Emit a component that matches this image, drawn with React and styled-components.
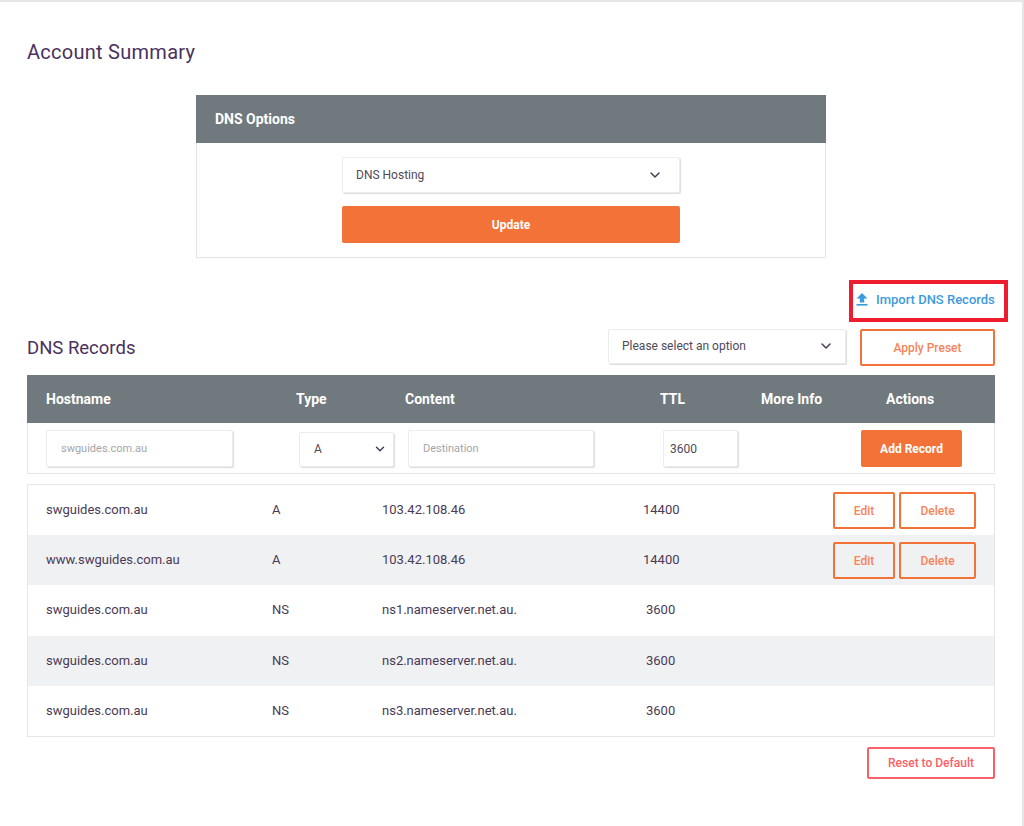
import React from 'react';
import styled, { createGlobalStyle } from 'styled-components';
import { ChevronDown } from 'lucide-react';

const GlobalStyle = createGlobalStyle`
  html, body {
    margin: 0;
    padding: 0;
    background: #fff;
    font-family: Roboto, "Liberation Sans", sans-serif;
    color: #4a3658;
  }
  * { box-sizing: border-box; }
`;

const Page = styled.div`
  width: 1024px;
  height: 826px;
  overflow: hidden;
  border-top: 2px solid #e6e6e6;
  border-right: 2px solid #e6e6e6;
  padding: 37px 27px 0 27px;
`;

const PageTitle = styled.h1`
  margin: 0;
  font-size: 20px;
  line-height: 26px;
  font-weight: 400;
  letter-spacing: 0.27px;
  color: #4a3160;
`;

const OptionsCard = styled.section`
  width: 630px;
  margin: 30px 0 0 169px;
  border: 1px solid #e4e4e4;
  border-top: none;
`;

const CardHeader = styled.div`
  height: 48px;
  margin: 0 -1px;
  padding-left: 19px;
  display: flex;
  align-items: center;
  background: #70797e;
  color: #fff;
  font-size: 14px;
  font-weight: 700;
`;

const CardBody = styled.div`
  padding: 14px 0 14px 145px;
  display: flex;
  flex-direction: column;
  gap: 13px;
`;

const Select = styled.div`
  width: ${(p) => p.$width}px;
  height: ${(p) => p.$height}px;
  padding: 0 ${(p) => p.$right || 16}px 1px ${(p) => p.$left || 13}px;
  display: flex;
  align-items: center;
  justify-content: space-between;
  background: #fff;
  border: 1px solid #ececec;
  border-radius: 2px;
  box-shadow: 1px 1px 1px #dcdcdc;
  font-size: 12px;
  color: #4f4a58;
`;

const SubmitButton = styled.button`
  width: ${(p) => p.$width}px;
  height: ${(p) => p.$height}px;
  padding: 0;
  background: #f37237;
  border: none;
  border-radius: 2px;
  color: #fff;
  font-family: inherit;
  font-size: 12px;
  font-weight: 700;
`;

const ImportRow = styled.div`
  margin-top: 22px;
  height: 42px;
  display: flex;
  justify-content: flex-end;
`;

const ImportLink = styled.a`
  width: 159px;
  margin-right: -13px;
  padding: 0 0 3px 3px;
  display: flex;
  align-items: center;
  gap: 8px;
  border: 4px solid #ed1c2e;
  color: #3d9bd9;
  font-size: 13px;
  font-weight: 500;
  white-space: nowrap;
`;

const RecordsBar = styled.div`
  height: 53px;
  padding-top: 7px;
  display: flex;
  align-items: flex-start;
`;

const SectionTitle = styled.h2`
  margin: 0;
  padding-top: 1px;
  flex: 1;
  font-size: 18.5px;
  line-height: 36px;
  font-weight: 400;
  color: #4a3160;
`;

const OutlineButton = styled.button`
  width: ${(p) => p.$width}px;
  height: ${(p) => p.$height}px;
  padding: 0;
  background: transparent;
  border: 2px solid ${(p) => p.$color || '#f37237'};
  border-radius: 2px;
  color: ${(p) => p.$text || '#f6845a'};
  font-family: inherit;
  font-size: 12px;
  font-weight: 500;
`;

const PresetButton = styled(OutlineButton)`
  margin-left: 14px;
`;

const TableHead = styled.div`
  height: 48px;
  padding-left: 19px;
  display: grid;
  grid-template-columns: 250px 109px 255px 101px 125px 1fr;
  align-items: center;
  background: #70797e;
  color: #fff;
  font-size: 14px;
  font-weight: 700;
`;

const FormRow = styled.div`
  height: 51px;
  padding-left: 18px;
  display: flex;
  align-items: center;
  border: 1px solid #e6e6e6;
  border-top: none;
`;

const TextInput = styled.input`
  width: ${(p) => p.$width}px;
  height: 37px;
  margin-left: ${(p) => p.$left || 0}px;
  padding: 1px ${(p) => p.$inset || 14}px 0;
  background: #fff;
  border: 1px solid #ececec;
  border-radius: 2px;
  box-shadow: 1px 1px 1px #dcdcdc;
  font-family: inherit;
  font-size: ${(p) => p.$size || 11}px;
  color: #4f4a58;
  &::placeholder { color: #a3a6a8; opacity: 1; }
`;

const TypeSelect = styled(Select)`
  margin: 2px 0 0 66px;
`;

const AddButton = styled(SubmitButton)`
  margin-left: 123px;
  padding: 1px 0 0;
`;

const RecordList = styled.div`
  margin-top: 10px;
  border: 1px solid #e6e6e6;
`;

const Row = styled.div`
  height: 50.2px;
  padding: 0 0 1px 18px;
  display: grid;
  grid-template-columns: 226px 110px 240px 60px 1fr;
  align-items: center;
  font-size: 13px;
  color: #4a3a55;
  background: ${(p) => (p.$shaded ? '#f0f1f3' : '#fff')};
`;

const Ttl = styled.span`
  padding-left: ${(p) => (p.$short ? 24 : 21)}px;
`;

const RowActions = styled.div`
  display: flex;
  justify-content: flex-end;
  gap: 4px;
  padding: 2px 18px 0 0;
`;

const FooterRow = styled.div`
  margin-top: 10px;
  display: flex;
  justify-content: flex-end;
`;

const records = [
  { host: 'swguides.com.au', type: 'A', content: '103.42.108.46', ttl: '14400', editable: true },
  { host: 'www.swguides.com.au', type: 'A', content: '103.42.108.46', ttl: '14400', editable: true },
  { host: 'swguides.com.au', type: 'NS', content: 'ns1.nameserver.net.au.', ttl: '3600' },
  { host: 'swguides.com.au', type: 'NS', content: 'ns2.nameserver.net.au.', ttl: '3600' },
  { host: 'swguides.com.au', type: 'NS', content: 'ns3.nameserver.net.au.', ttl: '3600' },
];

const UploadIcon = () => (
  <svg width="12" height="13" viewBox="0 0 12 13" fill="#3d9bd9">
    <path d="M6 0 11.5 5.6H8.2V9.6H3.8V5.6H.5Z" />
    <rect x="0.5" y="11" width="11" height="1.6" />
  </svg>
);

const App = () => {
  return (
    <Page>
      <GlobalStyle />
      <PageTitle>Account Summary</PageTitle>

      <OptionsCard>
        <CardHeader>DNS Options</CardHeader>
        <CardBody>
          <Select $width={338} $height={36}>
            DNS Hosting
            <ChevronDown size={16} strokeWidth={2.2} color="#4a3a55" />
          </Select>
          <SubmitButton $width={338} $height={37}>Update</SubmitButton>
        </CardBody>
      </OptionsCard>

      <ImportRow>
        <ImportLink>
          <UploadIcon />
          Import DNS Records
        </ImportLink>
      </ImportRow>

      <RecordsBar>
        <SectionTitle>DNS Records</SectionTitle>
        <Select $width={238} $height={35} $right={11}>
          Please select an option
          <ChevronDown size={16} strokeWidth={2.2} color="#4a3a55" />
        </Select>
        <PresetButton $width={135} $height={37}>Apply Preset</PresetButton>
      </RecordsBar>

      <TableHead>
        <span>Hostname</span>
        <span>Type</span>
        <span>Content</span>
        <span>TTL</span>
        <span>More Info</span>
        <span>Actions</span>
      </TableHead>

      <FormRow>
        <TextInput $width={187} placeholder="swguides.com.au" />
        <TypeSelect $width={95} $height={35} $left={14} $right={6}>
          A
          <ChevronDown size={14} strokeWidth={2.5} color="#4a3a55" />
        </TypeSelect>
        <TextInput $width={186} $left={14} placeholder="Destination" />
        <TextInput $width={75} $left={69} $inset={6} $size={12} defaultValue="3600" />
        <AddButton $width={101} $height={37}>Add Record</AddButton>
      </FormRow>

      <RecordList>
        {records.map((record, i) => (
          <Row key={i} $shaded={i % 2 === 1}>
            <span>{record.host}</span>
            <span>{record.type}</span>
            <span>{record.content}</span>
            <Ttl $short={!record.editable}>{record.ttl}</Ttl>
            {record.editable ? (
              <RowActions>
                <OutlineButton $width={62} $height={37}>Edit</OutlineButton>
                <OutlineButton $width={77} $height={37}>Delete</OutlineButton>
              </RowActions>
            ) : (
              <span />
            )}
          </Row>
        ))}
      </RecordList>

      <FooterRow>
        <OutlineButton $width={128} $height={32} $color="#fb5f68" $text="#fb5f68">
          Reset to Default
        </OutlineButton>
      </FooterRow>
    </Page>
  );
};

export default App;
